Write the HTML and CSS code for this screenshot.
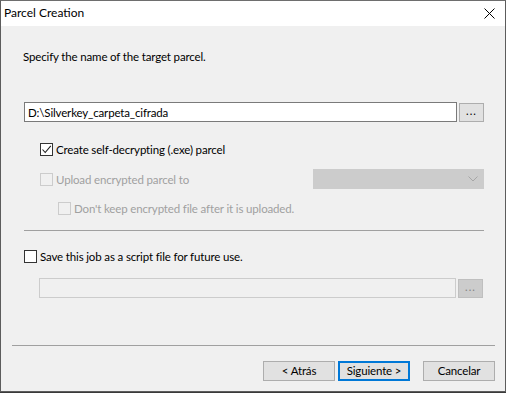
FILE: index.html
```html
<!DOCTYPE html>
<html lang="en">

<head>
    <meta charset="UTF-8">
    <title>Parcel Creation</title>
    <link rel="stylesheet" href="styles.css">
</head>

<body>
    <div class="window">
        <header class="titlebar">
            <span class="titlebar-text">Parcel Creation</span>
            <button class="closeButton" aria-label="Close">
                <svg width="11" height="11" viewBox="0 0 11 11">
                    <path d="M0.5 0.5 L10.5 10.5 M10.5 0.5 L0.5 10.5" stroke="#000" stroke-width="1" fill="none" />
                </svg>
            </button>
        </header>

        <main class="content">
            <p class="intro">Specify the name of the target parcel.</p>

            <div class="pathRow">
                <input class="textbox" type="text" value="D:\Silverkey_carpeta_cifrada">
                <button class="browseButton">...</button>
            </div>

            <label class="checkRow indent-1 row-exe">
                <span class="checkbox checked">
                    <svg width="11" height="11" viewBox="0 0 11 11">
                        <path d="M1.5 5.5 L4.2 8.5 L9.8 1.8" stroke="#1e1e1e" stroke-width="1.1" fill="none" />
                    </svg>
                </span>
                <span class="checkLabel">Create self-decrypting (.exe) parcel</span>
            </label>

            <div class="uploadRow">
                <label class="checkRow indent-1 disabled">
                    <span class="checkbox"></span>
                    <span class="checkLabel">Upload encrypted parcel to</span>
                </label>
                <div class="combo">
                    <svg class="combo-arrow" width="10" height="6" viewBox="0 0 10 6">
                        <path d="M0.5 0.5 L5 5 L9.5 0.5" stroke="#a6a6a6" stroke-width="1" fill="none" />
                    </svg>
                </div>
            </div>

            <label class="checkRow indent-2 disabled row-keep">
                <span class="checkbox"></span>
                <span class="checkLabel">Don't keep encrypted file after it is uploaded.</span>
            </label>

            <hr class="separator">

            <label class="checkRow row-script">
                <span class="checkbox"></span>
                <span class="checkLabel">Save this job as a script file for future use.</span>
            </label>

            <div class="pathRow scriptRow">
                <input class="textbox" type="text" disabled>
                <button class="browseButton" disabled>...</button>
            </div>
        </main>

        <hr class="footerLine">

        <footer class="buttons">
            <button class="dlgButton">&lt; Atrás</button>
            <button class="dlgButton default">Siguiente &gt;</button>
            <button class="dlgButton cancel">Cancelar</button>
        </footer>
    </div>
</body>

</html>
```

FILE: styles.css
```css
html,
body {
    margin: 0;
    padding: 0;
}

body {
    width: 506px;
    height: 393px;
    overflow: hidden;
    background: #3a3a3a;
    font-family: 'Lato', 'Noto Sans', sans-serif;
    font-size: 11.5px;
    letter-spacing: -0.15px;
    color: #000;
}

.window {
    box-sizing: border-box;
    width: 506px;
    height: 392px;
    border: 1px solid #5c5c5c;
    border-top-color: #6e6e6e;
    background: #f0f0f0;
    display: flex;
    flex-direction: column;
}

.titlebar {
    height: 25px;
    background: #fff;
    display: flex;
    align-items: center;
    justify-content: space-between;
    padding-left: 3px;
}

.titlebar-text {
    font-size: 12px;
    letter-spacing: 0;
    line-height: 16px;
    margin-top: -1px;
}

.closeButton {
    border: 0;
    background: transparent;
    padding: 0;
    margin: 0 10px 1px 0;
    width: 11px;
    height: 11px;
    display: flex;
}

.content {
    padding: 0 0 0 22px;
    display: flex;
    flex-direction: column;
}

.intro {
    margin: 23px 0 0 0;
    line-height: 15px;
}

.pathRow {
    margin-top: 38px;
    display: flex;
    align-items: flex-start;
    height: 20px;
}

.textbox {
    box-sizing: border-box;
    width: 433px;
    height: 20px;
    margin: 0 0 0 1px;
    padding: 0 3px;
    border: 1px solid #7a7a7a;
    background: #fff;
    font: inherit;
    letter-spacing: inherit;
    color: #000;
    outline: none;
}

.browseButton {
    box-sizing: border-box;
    width: 25px;
    height: 19px;
    margin: 1px 0 0 2px;
    padding: 0 0 4px 0;
    border: 1px solid #adadad;
    background: #e1e1e1;
    font: inherit;
    font-size: 11px;
    color: #000;
    letter-spacing: 1px;
}

.checkRow {
    display: flex;
    align-items: center;
    height: 13px;
    line-height: 13px;
}

.indent-1 {
    margin-left: 17px;
}

.indent-2 {
    margin-left: 35px;
}

.row-exe {
    margin-top: 21px;
}

.checkbox {
    box-sizing: border-box;
    width: 13px;
    height: 13px;
    border: 1px solid #333;
    background: #fff;
    display: flex;
    align-items: center;
    justify-content: center;
    flex: none;
}

.checkLabel {
    margin-left: 3px;
    white-space: nowrap;
}

.disabled .checkbox {
    border-color: #cccccc;
    background: #f0f0f0;
}

.disabled .checkLabel {
    color: #a0a0a0;
}

.uploadRow {
    margin-top: 13px;
    height: 20px;
    display: flex;
    align-items: center;
    justify-content: space-between;
    width: 461px;
}

.combo {
    box-sizing: border-box;
    width: 171px;
    height: 20px;
    background: #cccccc;
    border: 1px solid #cccccc;
    display: flex;
    align-items: center;
    justify-content: flex-end;
    padding-right: 5px;
}

.row-keep {
    margin-top: 13px;
}

.separator {
    margin: 15px 0 0 1px;
    width: 460px;
    height: 0;
    border: 0;
    border-top: 1px solid #a0a0a0;
}

.row-script {
    margin-top: 19px;
    margin-left: 1px;
}

.scriptRow {
    margin-top: 15px;
    padding-left: 15px;
}

.scriptRow .textbox {
    width: 417px;
    border-color: #cccccc;
    background: #f0f0f0;
}

.scriptRow .browseButton {
    background: #cccccc;
    border-color: #bfbfbf;
    color: #838383;
}

.footerLine {
    margin: 47px 0 0 11px;
    width: 483px;
    height: 0;
    border: 0;
    border-top: 1px solid #a0a0a0;
}

.buttons {
    margin-top: 15px;
    display: flex;
    justify-content: flex-end;
    padding-right: 10px;
}

.dlgButton {
    box-sizing: border-box;
    width: 72px;
    height: 20px;
    margin: 0 0 0 3px;
    padding: 0;
    border: 1px solid #adadad;
    background: #e1e1e1;
    font: inherit;
    letter-spacing: inherit;
    color: #000;
    line-height: 16px;
}

.dlgButton.default {
    border: 2px solid #0078d7;
}

.dlgButton.cancel {
    margin-left: 13px;
}
```
